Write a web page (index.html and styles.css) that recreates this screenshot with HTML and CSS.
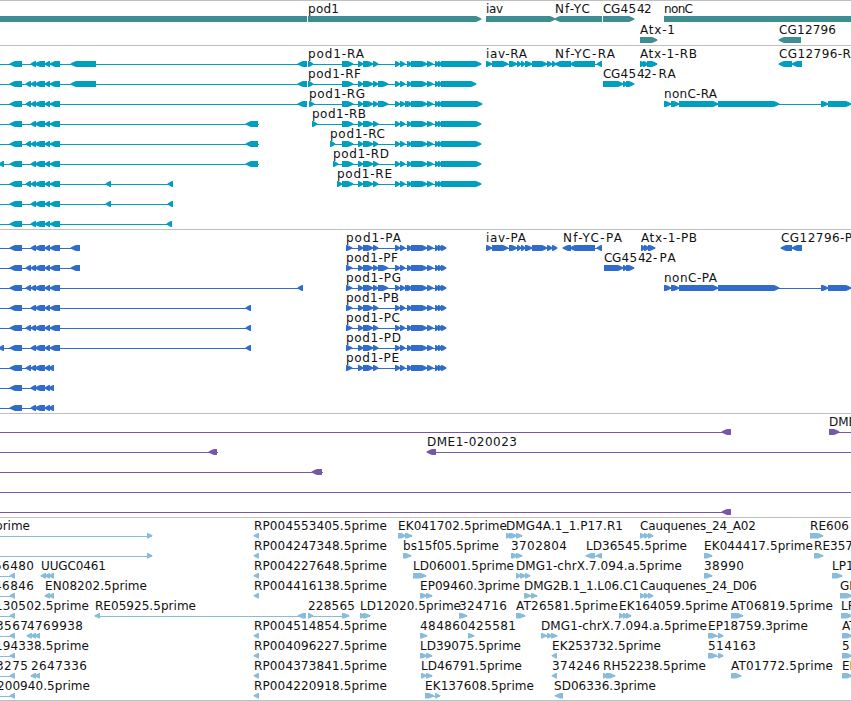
FILE: index.html
```
<!DOCTYPE html>
<html lang="en">
<head>
<meta charset="utf-8">
<title>Genome tracks</title>
<link rel="stylesheet" href="styles.css">
</head>
<body>
<main class="browser" id="browser"></main>
<script src="tracks.js"></script>
</body>
</html>
```
FILE: styles.css
```
body {
  margin: 0;
  background: #fff;
  overflow: hidden;
}

.browser {
  display: flex;
  flex-direction: column;
  width: 851px;
  height: 700px;
  border-bottom: 1px solid #bfbfbf;
}

.track {
  box-sizing: border-box;
  border-top: 1px solid #bfbfbf;
  overflow: hidden;
}

.track svg {
  display: block;
}

.track text {
  font: 12px "DejaVu Sans", sans-serif;
  fill: #111;
}

.genes { height: 45px; color: #3d8d93; }
.transcripts { height: 184px; color: #009fc0; }
.proteins { height: 184px; color: #306ccc; }
.insertions { height: 104px; color: #7758a8; }
.ests { height: 183px; color: #88bcdd; }
```
FILE: tracks.js
```
const NS = 'http://www.w3.org/2000/svg';

function add(parent, name, attrs) {
  const node = document.createElementNS(NS, name);
  for (const key in attrs) node.setAttribute(key, attrs[key]);
  parent.appendChild(node);
  return node;
}

// Block with a pointed end: R points right, L points left, B is a plain bar.
function blockPath(dir, a, b, y, h) {
  if (dir === 'B') return `M${a} ${y}H${b}v${h}H${a}z`;
  const t = Math.min(5, b - a - 1);
  const m = y + h / 2;
  if (dir === 'R') {
    return `M${a} ${y}H${b - t}L${b - t / 2} ${y + 1}L${b + .4} ${m - .5}V${m + .5}L${b - t / 2} ${y + h - 1}L${b - t} ${y + h}H${a}z`;
  }
  return `M${b} ${y}H${a + t}L${a + t / 2} ${y + 1}L${a - .4} ${m - .5}V${m + .5}L${a + t / 2} ${y + h - 1}L${a + t} ${y + h}H${b}z`;
}

// features: [row, direction, lineStart, lineEnd, blocks, label, labelStart, labelEnd]
// labelStart may be a space-separated list with one position per character.
function track(name, height, step, blockHeight, features) {
  const section = document.createElement('section');
  section.className = 'track ' + name;
  const svg = add(section, 'svg', { width: 851, height: height - 1, viewBox: `0 1 851 ${height - 1}` });
  for (const [row, dir, from, to, blocks] of features) {
    const y = 16 + row * step;
    if (to > from) add(svg, 'rect', { x: from, y: y + 3, width: to - from, height: 1, fill: 'currentColor' });
    let d = '';
    for (let i = 0; i < blocks.length; i += 2) {
      d = blockPath(dir, blocks[i], blocks[i + 1], y, blockHeight);
      add(svg, 'path', { d, fill: 'currentColor' });
    }
  }
  for (const f of features) {
    if (!f[5]) continue;
    const attrs = { x: f[6], y: 13 + f[0] * step };
    if (f[7]) attrs.textLength = f[7] - f[6];
    add(svg, 'text', attrs).textContent = f[5];
  }
  document.getElementById('browser').appendChild(section);
}

const left = [10,22, 31,36, 35,45, 45,50, 50,60];
const leftExtra = [...left, 26,31];
const leftShort = [10,22, 31,36, 35,45, 45,50, 49,54];
const mid = [358,363, 363,373, 373,378, 395,400, 400,405, 407,412, 411,427, 427,433, 435,439, 438,442];
const midF = [...mid, 378,388];
const midG = [...midF, 405,410];
const iav = [486,492, 492,508, 509,517, 517,521, 521,525, 525,532, 532,547, 547,552];
const nonC = [664,671, 671,679, 679,718, 718,779, 821,828, 828,851];

track('genes', 45, 21, 6, [
  [0, 'B', 0, 0, [0,307]],
  [0, 'R', 0, 0, [308,481], 'pod1', 308, 339],
  [0, 'R', 0, 0, [486,555], 'iav', 486, 503],
  [0, 'L', 0, 0, [555,602], 'Nf-YC', 555, 590],
  [0, 'R', 0, 0, [603,634], 'CG4542', '603 611 620.5 628.5 637 644'],
  [0, 'B', 0, 0, [664,851], 'nonC', 664, 693],
  [1, 'R', 0, 0, [640,657], 'Atx-1', 640, 675],
  [1, 'L', 0, 0, [779,801], 'CG12796', 779, 836]
]);

const rna = (row, start, name, end, labelEnd, core = mid) =>
  [row, 'R', start, end, [start, start + 5, 342,353, ...core, 441,end], 'pod1-' + name, start, labelEnd];

track('transcripts', 184, 20, 6, [
  [0, 'L', 0, 307, [...left, 71,96, 298,307]],
  [1, 'L', 0, 307, [...leftExtra, 71,96, 298,307]],
  [2, 'L', 0, 307, [...leftExtra, 298,307]],
  [3, 'L', 0, 259, [...left, 246,258]],
  [4, 'L', 0, 259, [...leftExtra, 246,258]],
  [5, 'L', 0, 259, [-1,4, ...left, 246,258]],
  [6, 'L', 0, 173, [...leftExtra, 106,111, 168,173]],
  [7, 'L', 0, 173, [...left, 106,111, 168,173]],
  [8, 'L', 0, 172, [...left, 167,172]],
  rna(0, 308, 'RA', 481, 364),
  rna(1, 308, 'RF', 476, 361, midF),
  rna(2, 309, 'RG', 482, 365, midG),
  rna(3, 312, 'RB', 481, 366),
  rna(4, 330, 'RC', 481, 385),
  rna(5, 333, 'RD', 481, 389),
  rna(6, 337, 'RE', 481, 392),
  [0, 'R', 486, 556, [...iav, 552,556], 'iav-RA', 486, 527],
  [0, 'L', 556, 602, [555,571, 570,595, 597,602], 'Nf-YC-RA', 555, 615],
  [1, 'R', 603, 634, [603,606, 604,623, 623,627, 626,634], 'CG4542-RA', '603 611 620.5 628.5 637 644 652 658.5 667.5'],
  [0, 'R', 640, 657, [640,645, 643,648, 647,657], 'Atx-1-RB', 640, 697],
  [0, 'L', 779, 802, [779,792, 792,802], 'CG12796-RA', 779, 859],
  [2, 'R', 664, 851, nonC, 'nonC-RA', 664, 717]
]);

const protein = (row, name, labelEnd, core = mid) =>
  [row, 'R', 346, 446, [346,352, ...core, 441,446], 'pod1-' + name, 346, labelEnd];

track('proteins', 184, 20, 6, [
  [0, 'L', 0, 80, [...left, 71,80]],
  [1, 'L', 0, 80, [...leftExtra, 71,80]],
  [2, 'L', 0, 303, [...leftExtra, 298,303]],
  [3, 'L', 0, 251, [...left, 246,251]],
  [4, 'L', 0, 251, [...leftExtra, 246,251]],
  [5, 'L', 0, 251, [-1,4, ...left, 246,251]],
  [6, 'L', 0, 54, [...leftShort, 26,31]],
  [7, 'L', 0, 54, leftShort],
  [8, 'L', 0, 54, leftShort],
  protein(0, 'PA', 401),
  protein(1, 'PF', 398, midF),
  protein(2, 'PG', 401, midG),
  protein(3, 'PB', 399),
  protein(4, 'PC', 400),
  protein(5, 'PD', 401),
  protein(6, 'PE', 399),
  [0, 'R', 486, 557, [...iav, 552,557], 'iav-PA', 486, 526],
  [0, 'L', 563, 602, [563,571, 570,595, 597,602], 'Nf-YC-PA', 563, 622],
  [1, 'R', 604, 634, [604,623, 623,627, 626,634], 'CG4542-PA', '604 612 621.5 629.5 638 645 653 659.5 667.5'],
  [0, 'R', 641, 655, [641,645, 644,649, 648,655], 'Atx-1-PB', 641, 697],
  [0, 'L', 781, 802, [781,792, 792,802], 'CG12796-PA', 781, 860],
  [2, 'R', 664, 851, nonC, 'nonC-PA', 664, 717]
]);

track('insertions', 104, 20, 6, [
  [0, 'L', 0, 731, [722,731]],
  [0, 'R', 829, 851, [829,839], 'DME1', 829],
  [1, 'L', 0, 218, [209,217]],
  [1, 'L', 427, 851, [427,436], 'DME1-020023', 427, 517],
  [2, 'L', 0, 323, [312,322]],
  [3, 'L', 0, 851, []],
  [4, 'L', 0, 731, [722,731]]
]);

const tail = (row, text, start, end) => [row, 'L', 0, row > 1 ? 15 : 0, row > 1 ? [10,15] : [], text, start, end];
const rp = (row, id) => [row, 'L', 0, 0, [254,259], 'RP00' + id + '.5prime', 254, 387];

track('ests', 183, 20, 5.5, [
  [0, 'R', 0, 152, [147,152]],
  [1, 'R', 0, 152, [147,152]],
  tail(0, 'prime', -5, 30),
  tail(2, '56480', -6, 34),
  tail(3, '46846', -6, 34),
  tail(4, '130502.5prime', -5, 89),
  tail(5, '3567', -4, 28),
  tail(6, '194338.5prime', -5, 89),
  tail(7, '3275', -4, 28),
  tail(8, '200940.5prime', -3, 90),
  [2, 'L', 41, 54, [41,46, 45,50, 49,54], 'UUGC0461', 41, 106],
  [3, 'L', 45, 54, [45,50, 49,54], 'EN08202.5prime', 45, 147],
  [4, 'L', 95, 306, [95,100, 298,306], 'RE05925.5prime', 95, 196],
  [5, 'L', 27, 40, [27,32, 31,36, 35,40], '4769938', 27, 83],
  [7, 'L', 31, 40, [31,36, 35,40], '2647336', 31, 87],
  rp(0, '4553405'), rp(1, '4247348'), rp(2, '4227648'), rp(3, '4416138'),
  rp(5, '4514854'), rp(6, '4096227'), rp(7, '4373841'), rp(8, '4220918'),
  [4, 'R', 308, 349, [308,313, 342,349], '228565', 308, 355],
  [4, 'R', 360, 370, [360,365, 363,370], 'LD12020.5prime', 360, 461],
  [0, 'R', 398, 412, [398,406, 405,412], 'EK041702.5prime', 398, 507],
  [1, 'R', 403, 411, [403,411], 'bs15f05.5prime', 403, 499],
  [2, 'R', 413, 426, [413,426], 'LD06001.5prime', 413, 514],
  [3, 'R', 420, 432, [420,427, 426,432], 'EP09460.3prime', 420, 520],
  [5, 'R', 420, 427, [420,427], '484860', 420, 468],
  [6, 'R', 420, 432, [420,427, 426,432], 'LD39075.5prime', 420, 521],
  [7, 'R', 421, 432, [421,427, 426,432], 'LD46791.5prime', 421, 522],
  [8, 'R', 425, 440, [425,434, 435,440], 'EK137608.5prime', 425, 534],
  [4, 'R', 459, 467, [459,467], '324716', 459, 507],
  [5, 'R', 468, 474, [468,474], '425581', 468, 516],
  [0, 'R', 506, 522, [506,511, 509,517, 516,522], 'DMG4A.1_1.P17.R1', 506, 623],
  [1, 'R', 511, 522, [511,518, 516,522], '3702804', 511, 567],
  [2, 'R', 516, 530, [516,521, 520,526, 525,530], 'DMG1-chrX.7.094.a.5prime', 516, 682],
  [3, 'R', 524, 537, [524,531, 531,537], 'DMG2B.1_1.L06.C1', 524, 639],
  [4, 'R', 516, 525, [516,525], 'AT26581.5prime', 516, 618],
  [5, 'R', 541, 557, [541,547, 547,552, 551,557], 'DMG1-chrX.7.094.a.5prime', 541, 707],
  [6, 'L', 0, 0, [552,557], 'EK253732.5prime', 552, 661],
  [7, 'L', 0, 0, [552,557], '374246', 552, 600],
  [8, 'L', 0, 0, [555,563], 'SD06336.3prime', 554, 656],
  [1, 'L', 586, 602, [586,595, 596,602], 'LD36545.5prime', 586, 687],
  [4, 'R', 619, 631, [619,624, 623,628, 626,631], 'EK164059.5prime', 619, 728],
  [7, 'R', 603, 615, [603,608, 606,615], 'RH52238.5prime', 603, 706],
  [0, 'R', 640, 653, [640,645, 644,649, 648,653], 'Cauquenes_24_A02', 640, 756],
  [3, 'R', 640, 653, [640,645, 644,649, 648,653], 'Cauquenes_24_D06', 640, 757],
  [1, 'R', 704, 712, [704,712], 'EK044417.5prime', 704, 813],
  [2, 'R', 704, 712, [704,712], '38990', 704, 744],
  [5, 'R', 708, 723, [708,717, 718,723], 'EP18759.3prime', 708, 808],
  [6, 'R', 708, 723, [708,717, 718,723], '514163', 708, 756],
  [4, 'R', 731, 743, [731,743], 'AT06819.5prime', 731, 833],
  [7, 'R', 731, 741, [731,741], 'AT01772.5prime', 731, 833],
  [0, 'R', 810, 823, [810,823], 'RE606', 810, 849],
  [1, 'R', 814, 823, [814,823], 'RE357', 814, 853],
  [2, 'R', 832, 842, [832,842], 'LP1', 832],
  [3, 'R', 840, 852, [840,852], 'GH', 840],
  [4, 'R', 841, 852, [841,852], 'LP', 841],
  [5, 'R', 842, 852, [842,852], 'AT', 842],
  [6, 'R', 842, 852, [842,852], '5', 842],
  [7, 'R', 842, 852, [842,852], 'EK', 842]
]);
```
